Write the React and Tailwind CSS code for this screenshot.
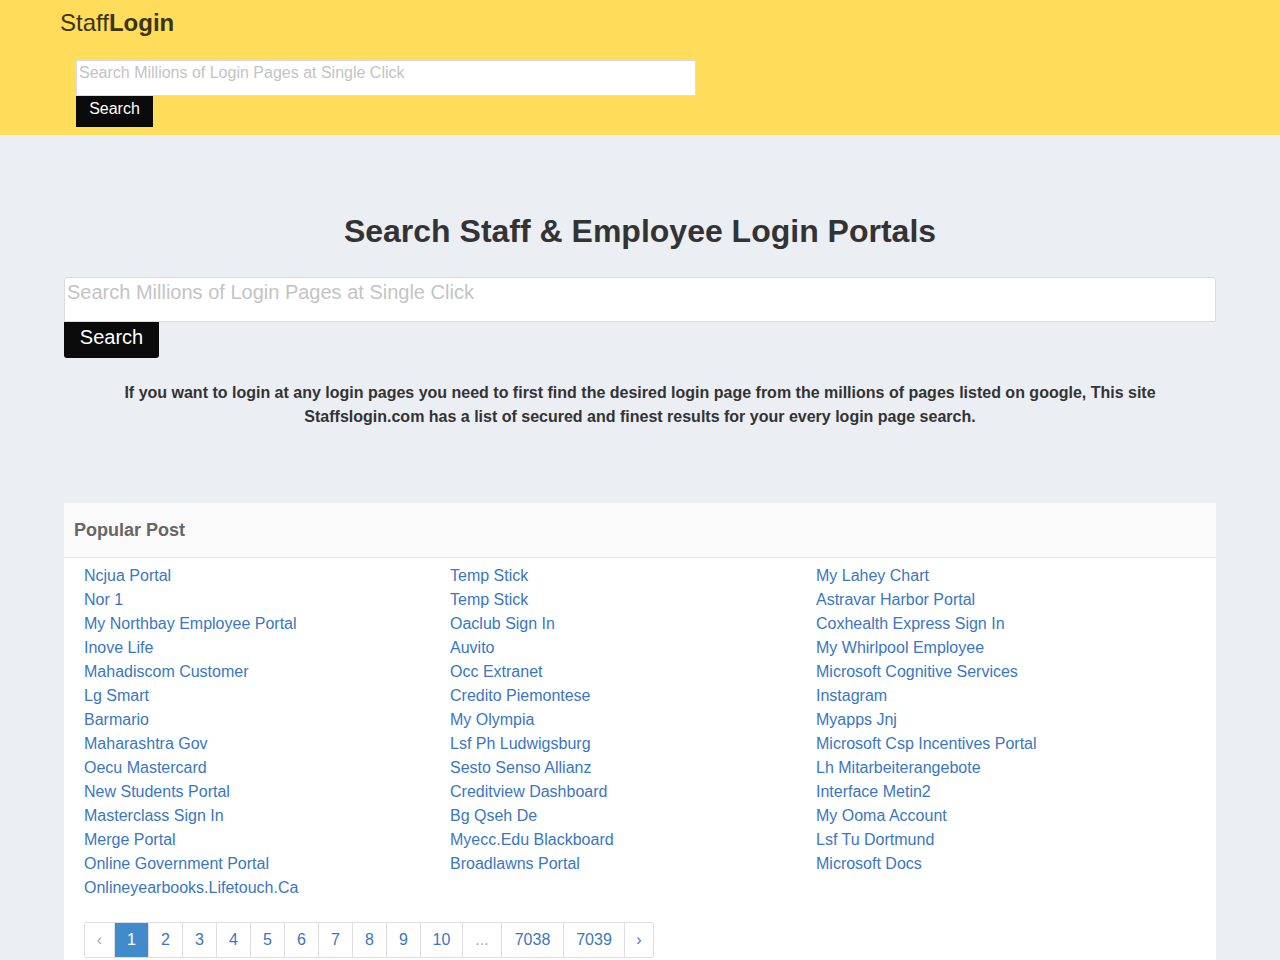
import React from "react";

const col1 = [
  "Ncjua Portal",
  "Nor 1",
  "My Northbay Employee Portal",
  "Inove Life",
  "Mahadiscom Customer",
  "Lg Smart",
  "Barmario",
  "Maharashtra Gov",
  "Oecu Mastercard",
  "New Students Portal",
  "Masterclass Sign In",
  "Merge Portal",
  "Online Government Portal",
  "Onlineyearbooks.Lifetouch.Ca",
];

const col2 = [
  "Temp Stick",
  "Temp Stick",
  "Oaclub Sign In",
  "Auvito",
  "Occ Extranet",
  "Credito Piemontese",
  "My Olympia",
  "Lsf Ph Ludwigsburg",
  "Sesto Senso Allianz",
  "Creditview Dashboard",
  "Bg Qseh De",
  "Myecc.Edu Blackboard",
  "Broadlawns Portal",
];

const col3 = [
  "My Lahey Chart",
  "Astravar Harbor Portal",
  "Coxhealth Express Sign In",
  "My Whirlpool Employee",
  "Microsoft Cognitive Services",
  "Instagram",
  "Myapps Jnj",
  "Microsoft Csp Incentives Portal",
  "Lh Mitarbeiterangebote",
  "Interface Metin2",
  "My Ooma Account",
  "Lsf Tu Dortmund",
  "Microsoft Docs",
];

const pages = [
  { label: "‹", w: "w-[29px]", muted: true },
  { label: "1", w: "w-[34px]", active: true },
  { label: "2", w: "w-[34px]" },
  { label: "3", w: "w-[34px]" },
  { label: "4", w: "w-[34px]" },
  { label: "5", w: "w-[34px]" },
  { label: "6", w: "w-[34px]" },
  { label: "7", w: "w-[34px]" },
  { label: "8", w: "w-[34px]" },
  { label: "9", w: "w-[34px]" },
  { label: "10", w: "w-[42px]" },
  { label: "...", w: "w-[39px]", muted: true },
  { label: "7038", w: "w-[62px]" },
  { label: "7039", w: "w-[61px]" },
  { label: "›", w: "w-[29px]" },
];

function LinkList({ items }) {
  return (
    <ul>
      {items.map((t, i) => (
        <li key={i} className="h-6 leading-6">
          <a href="#" className="text-[#3a76c4]">
            {t}
          </a>
        </li>
      ))}
    </ul>
  );
}

export default function App() {
  return (
    <div className="min-h-[960px] bg-[#ebeef3] font-['Liberation_Sans',Arial,sans-serif] text-[#333]">
      {/* top bar */}
      <header className="h-[136px] bg-[#ffdc5a] border-b border-[#fff3c4]">
        <div className="pl-[60px] pt-[8px] text-[24px] leading-[30px] text-[#3b3410]">
          Staff<b>Login</b>
        </div>
        <div className="ml-[76px] mt-[22px] w-[620px]">
          <div className="h-[36px] bg-white border border-[#ddd] px-[2px] pt-[1px] text-[16px] leading-[22px] text-[#c4c4c4]">
            Search Millions of Login Pages at Single Click
          </div>
          <button className="h-[31px] w-[77px] bg-[#0a0a0a] text-white text-[16px] leading-[24px] pb-[6px]">
            Search
          </button>
        </div>
      </header>

      {/* hero */}
      <section className="px-[64px] pt-[77px]">
        <h1 className="text-center text-[32px] leading-[36px] font-bold text-[#333]">
          Search Staff &amp; Employee Login Portals
        </h1>
        <div className="mt-[28px] h-[45px] bg-white border border-[#dcdcdc] rounded-t-[3px] px-[2px] text-[20px] leading-[28px] text-[#c4c4c4]">
          Search Millions of Login Pages at Single Click
        </div>
        <button className="h-[36px] w-[95px] bg-[#0a0a0a] text-white text-[20px] leading-[30px] pb-[6px] rounded-b-[3px]">
          Search
        </button>
        <p className="mt-[23px] px-[50px] text-center text-[16px] leading-6 font-bold text-[#333]">
          If you want to login at any login pages you need to first find the desired login page from the millions of pages listed on google, This site
          Staffslogin.com has a list of secured and finest results for your every login page search.
        </p>
      </section>

      {/* popular post */}
      <section className="mx-[64px] mt-[74px] bg-white">
        <div className="h-[55px] bg-[#fafafa] border-b border-[#e3e3e3] px-[10px] flex items-center">
          <h2 className="text-[18px] font-bold text-[#666]">Popular Post</h2>
        </div>
        <div className="px-[20px] pt-[6px] grid grid-cols-[366px_366px_1fr]">
          <LinkList items={col1} />
          <LinkList items={col2} />
          <LinkList items={col3} />
        </div>
        <div className="px-[20px] pt-[22px] pb-[10px]">
          <ul className="inline-flex border border-[#ddd] rounded-[3px] bg-white">
            {pages.map((p, i) => (
              <li
                key={i}
                className={`${p.w} h-[34px] flex items-center justify-center text-[16px] ${
                  i > 0 ? "border-l border-[#ddd]" : ""
                } ${
                  p.active
                    ? "bg-[#428bca] text-white"
                    : p.muted
                    ? "text-[#aaa] text-[13px]"
                    : "text-[#3a76c4]"
                }`}
              >
                {p.label}
              </li>
            ))}
          </ul>
        </div>
      </section>
    </div>
  );
}
